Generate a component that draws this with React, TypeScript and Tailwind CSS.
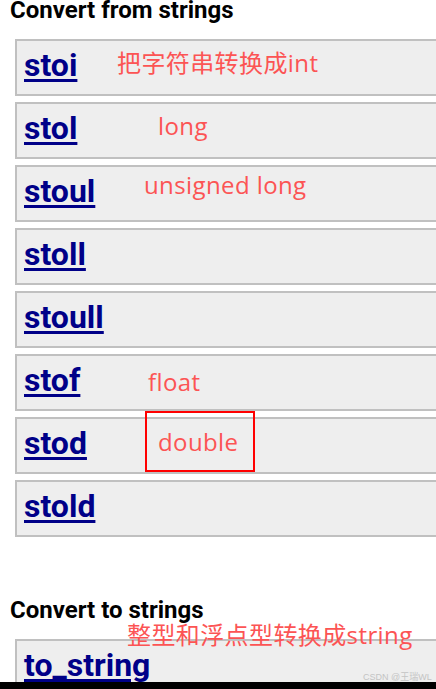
import React from 'react';

type Note = {
  text: string;
  top: number;
  left: number;
};

type Row = {
  name: string;
  note?: Note;
  boxed?: boolean;
};

const fromRows: Row[] = [
  { name: 'stoi', note: { text: '把字符串转换成int', top: 10, left: 100 } },
  { name: 'stol', note: { text: 'long', top: 10, left: 141 } },
  { name: 'stoul', note: { text: 'unsigned long', top: 6, left: 127 } },
  { name: 'stoll' },
  { name: 'stoull' },
  { name: 'stof', note: { text: 'float', top: 14, left: 131 } },
  { name: 'stod', note: { text: 'double', top: 11, left: 141 }, boxed: true },
  { name: 'stold' },
];

const noteFont = { fontFamily: '"Open Sans", "Noto Sans CJK SC", sans-serif' };
const headFont = { fontFamily: 'Roboto, "Liberation Sans", sans-serif' };

const FnRow: React.FC<{ row: Row }> = ({ row }) => (
  <div className="relative h-[57px] w-[430px] border-2 border-[#c0c0c0] bg-[#eeeeee] pl-[7px] pt-[6px]">
    <a
      href="#"
      style={headFont}
      className="text-[32px] leading-[36px] font-bold text-[#000088] underline decoration-[3px] underline-offset-[3px]"
    >
      {row.name}
    </a>
    {row.note && (
      <span
        style={{ ...noteFont, top: row.note.top, left: row.note.left }}
        className="absolute whitespace-nowrap text-[24px] leading-[24px] tracking-[0.4px] text-[#fc5454]"
      >
        {row.note.text}
      </span>
    )}
    {row.boxed && (
      <span className="absolute -top-[8px] left-[128px] h-[61px] w-[110px] border-2 border-[#ff0000]" />
    )}
  </div>
);

export default function App() {
  return (
    <div className="relative h-[689px] w-[436px] overflow-hidden bg-white">
      <div className="h-[682px] overflow-hidden">
        <h3 style={headFont} className="-mt-[2px] pl-[10px] text-[24px] leading-[24px] font-bold text-black">
          Convert from strings
        </h3>
        <div className="mt-[17px] ml-[15px] flex flex-col gap-[6px]">
          {fromRows.map(r => (
            <FnRow key={r.name} row={r} />
          ))}
        </div>

        <h3 style={headFont} className="mt-[61px] pl-[10px] text-[24px] leading-[24px] font-bold text-black">
          Convert to strings
        </h3>
        <div className="mt-[17px] ml-[15px]">
          <FnRow row={{ name: 'to_string', note: { text: '整型和浮点型转换成string', top: -18, left: 110 } }} />
        </div>
      </div>
      <div className="h-[7px] bg-black" />

      {/* watermark */}
      <span
        style={{ fontFamily: '"Liberation Sans", "Noto Sans CJK SC", sans-serif' }}
        className="absolute left-[363px] top-[673px] whitespace-nowrap text-[9px] leading-[9px] text-[#c4c4c4]"
      >
        CSDN @王瑞WL
      </span>
    </div>
  );
}
